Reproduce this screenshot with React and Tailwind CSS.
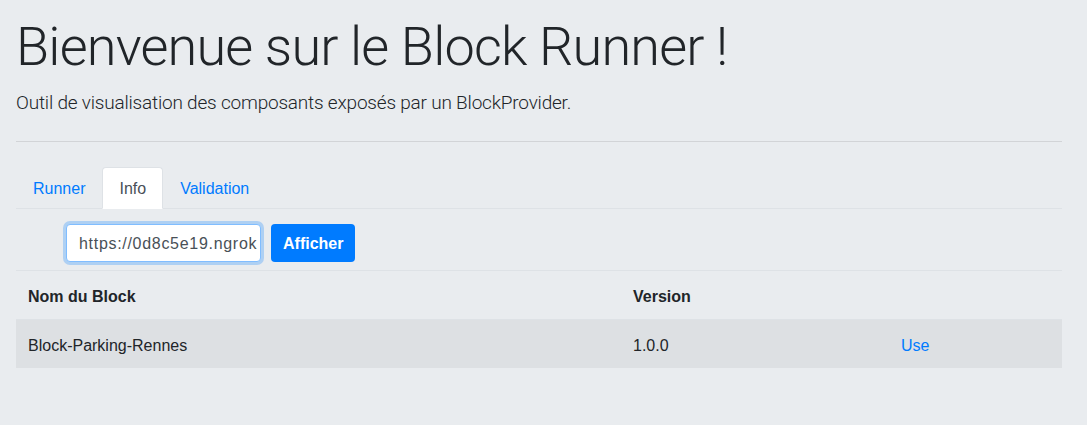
import React, { useState } from "react"

const blocks = [
  { name: "Block-Parking-Rennes", version: "1.0.0" },
]

const tabs = ["Runner", "Info", "Validation"]

export default function App() {
  const [active, setActive] = useState("Info")
  const [url, setUrl] = useState("https://0d8c5e19.ngrok.io")

  return (
    <div className="min-h-[425px] bg-[#e9ecef] px-4 pt-[15px] text-[16px] text-[#212529] font-['Liberation_Sans',Arial,sans-serif]">
      <div className="w-[1046px]">
        <h1 className="mb-[9px] font-['Roboto',sans-serif] text-[54px] font-light leading-[1.2] tracking-[-0.8px]">
          Bienvenue sur le Block Runner !
        </h1>
        <p className="font-['Roboto',sans-serif] text-[19px] font-light leading-[1.5] tracking-[-0.2px]">
          Outil de visualisation des composants exposés par un BlockProvider.
        </p>
        <hr className="mt-6 mb-[25px] border-t border-[#d2d4d7]" />

        {/* tabs */}
        <ul className="flex border-b border-[#dee2e6]">
          {tabs.map((t) => (
            <li key={t} className="-mb-px">
              <button
                onClick={() => setActive(t)}
                className={
                  t === active
                    ? "block rounded-t border border-[#dee2e6] border-b-white bg-white px-4 pt-[9px] pb-[7px] leading-6 text-[#495057]"
                    : "block border border-transparent px-4 pt-[9px] pb-[7px] leading-6 text-[#007bff]"
                }
              >
                {t}
              </button>
            </li>
          ))}
        </ul>

        <form className="mt-[15px] ml-[50px] flex items-center gap-[10px]" onSubmit={(e) => e.preventDefault()}>
          <input
            value={url}
            onChange={(e) => setUrl(e.target.value)}
            className="h-[38px] w-[195px] rounded border border-[#80bdff] bg-white pl-3 pr-[2px] pt-[2px] text-[16px] tracking-[0.7px] text-[#495057] shadow-[0_0_0_3px_rgba(0,123,255,0.25)] outline-none"
          />
          <button className="h-[38px] rounded bg-[#007bff] px-3 pt-[2px] font-bold text-white">
            Afficher
          </button>
        </form>

        <table className="mt-[8px] w-full border-collapse text-left">
          <thead>
            <tr>
              <th className="w-[605px] border-t border-[#dee2e6] px-3 pt-[14px] pb-[10px] font-bold">Nom du Block</th>
              <th className="w-[268px] border-t border-[#dee2e6] px-3 pt-[14px] pb-[10px] font-bold">Version</th>
              <th className="border-t border-[#dee2e6] px-3 pt-[14px] pb-[10px]"></th>
            </tr>
          </thead>
          <tbody>
            {blocks.map((b) => (
              <tr key={b.name} className="bg-[#dde0e3]">
                <td className="border-t border-[#dee2e6] px-3 pt-[14px] pb-[10px]">{b.name}</td>
                <td className="border-t border-[#dee2e6] px-3 pt-[14px] pb-[10px]">{b.version}</td>
                <td className="border-t border-[#dee2e6] px-3 pt-[14px] pb-[10px]">
                  <a href="#" className="text-[#007bff]">Use</a>
                </td>
              </tr>
            ))}
          </tbody>
        </table>
      </div>
    </div>
  )
}
